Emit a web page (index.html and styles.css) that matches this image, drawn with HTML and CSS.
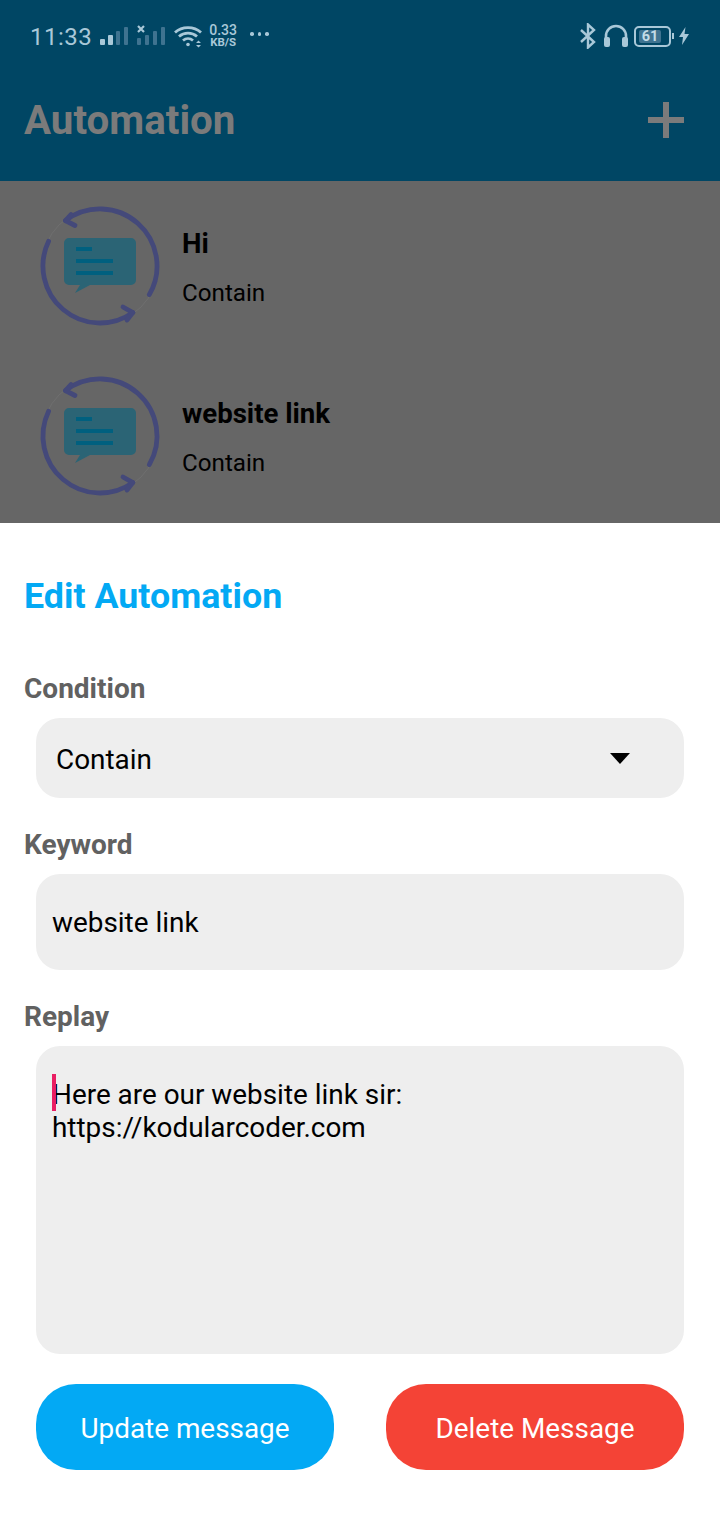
FILE: index.html
```html
<!DOCTYPE html>
<html lang="en">
<head>
  <meta charset="UTF-8"/>
  <title>Automation</title>
  <link rel="stylesheet" href="styles.css">
</head>
<body>
  <div class="screen">
    <!-- Dimmed page behind the sheet -->
    <div class="backdrop">
      <header class="app-bar">
        <div class="status-bar">
          <div class="status-left">
            <span class="clock">11:33</span>
            <svg class="sig" width="32" height="22" viewBox="0 0 32 22">
              <rect x="1" y="14" width="5" height="6" rx="1" fill="#a9c8d8"/>
              <rect x="9" y="10" width="5" height="10" rx="1" fill="#a9c8d8"/>
              <rect x="17" y="6" width="4" height="14" rx="1" fill="#3f7390"/>
              <rect x="25" y="2" width="4" height="18" rx="1" fill="#3f7390"/>
            </svg>
            <svg class="sig sig-2" width="32" height="22" viewBox="0 0 32 22">
              <path d="M2 1l6 6M8 1l-6 6" stroke="#a9c8d8" stroke-width="2.2"/>
              <rect x="1" y="13" width="4" height="7" rx="1" fill="#3f7390"/>
              <rect x="9" y="10" width="4" height="10" rx="1" fill="#3f7390"/>
              <rect x="17" y="6" width="4" height="14" rx="1" fill="#3f7390"/>
              <rect x="25" y="2" width="4" height="18" rx="1" fill="#3f7390"/>
            </svg>
            <svg class="wifi" width="30" height="24" viewBox="0 0 30 24" fill="none" stroke="#a9c8d8" stroke-width="2.8">
              <path d="M1 8.500C8 2 20 2 27 8.500"/>
              <path d="M5 12.500C10 8 18 8 23 12.500"/>
              <path d="M9 16.500C12 14 16 14 19 16.500"/>
              <circle cx="14" cy="20.500" r="1.800" fill="#a9c8d8" stroke="none"/>
              <path d="M22 19l2.500-2.500 2.500 2.500zM22 21h5l-2.500 2.500z" fill="#a9c8d8" stroke="none"/>
            </svg>
            <div class="speed"><span>0.33</span><span class="speed-unit">KB/S</span></div>
            <span class="more">
              <i></i><i></i><i></i>
            </span>
          </div>
          <div class="status-right">
            <svg width="18" height="26" viewBox="0 0 18 26" fill="none" stroke="#a9c8d8" stroke-width="2.400">
              <path d="M2 7l13 12-6 5.500V1.500l6 5.500L2 19"/>
            </svg>
            <svg width="26" height="24" viewBox="0 0 26 24" fill="none">
              <path d="M3 16V12a10 10 0 0 1 20 0v4" stroke="#a9c8d8" stroke-width="2.600"/>
              <rect x="1" y="13" width="6" height="10" rx="2" fill="#a9c8d8"/>
              <rect x="19" y="13" width="6" height="10" rx="2" fill="#a9c8d8"/>
            </svg>
            <div class="battery"><span class="battery-level">61</span></div>
            <svg width="12" height="18" viewBox="0 0 12 18"><path d="M7.500 0L1 10h4l-1 8 7-11H6.500z" fill="#a9c8d8"/></svg>
          </div>
        </div>
        <div class="title-row">
          <h1>Automation</h1>
          <span class="add-btn"></span>
        </div>
      </header>

      <div class="list">
        <div class="list-item">
          <svg class="item-icon" width="120" height="120" viewBox="0 0 120 120">
            <use href="#autoIcon"/>
          </svg>
          <div class="item-text">
            <div class="item-title">Hi</div>
            <div class="item-sub">Contain</div>
          </div>
        </div>
        <div class="list-item">
          <svg class="item-icon" width="120" height="120" viewBox="0 0 120 120">
            <use href="#autoIcon"/>
          </svg>
          <div class="item-text">
            <div class="item-title">website link</div>
            <div class="item-sub">Contain</div>
          </div>
        </div>
      </div>
    </div>

    <!-- Bottom sheet -->
    <section class="sheet">
      <h2>Edit Automation</h2>

      <label class="field-label label-condition">Condition</label>
      <div class="field select-field">
        <span>Contain</span>
        <span class="caret"></span>
      </div>

      <label class="field-label">Keyword</label>
      <div class="field input-field">website link</div>

      <label class="field-label">Replay</label>
      <div class="field text-field">
        <span class="cursor"></span>
        <p>Here are our website link sir:<br>https://kodularcoder.com</p>
      </div>

      <div class="actions">
        <button class="btn btn-update">Update message</button>
        <button class="btn btn-delete">Delete Message</button>
      </div>
    </section>
  </div>

  <svg width="0" height="0" class="defs">
    <defs>
      <g id="autoIcon">
        <circle cx="60" cy="61" r="58" fill="none" stroke="#6f6f6f" stroke-width="1"/>
        <g fill="none" stroke="#44497a" stroke-width="4.800" stroke-linecap="round">
          <path d="M25.500 15.600A57 57 0 0 1 109.300 89.600"/>
          <path d="M25.500 15.600l9.500 4.900M25.500 15.600l5.500-6"/>
          <path d="M8.600 36.300A57 57 0 0 0 92.800 107.600"/>
          <path d="M92.800 107.600l-9.800-5.600M92.800 107.600l-5.800 7.400"/>
        </g>
        <path d="M29 33h62a5 5 0 0 1 5 5v37a5 5 0 0 1-5 5H50l-15 8 5-8H29a5 5 0 0 1-5-5V38a5 5 0 0 1 5-5z" fill="#2b6475"/>
        <rect x="36" y="42" width="16" height="4" fill="#00607f"/>
        <rect x="36" y="54" width="37" height="4" fill="#00607f"/>
        <rect x="36" y="66" width="37" height="4" fill="#00607f"/>
      </g>
    </defs>
  </svg>
</body>
</html>
```

FILE: styles.css
```css
* { box-sizing: border-box; margin: 0; padding: 0; }
body { font-family: Roboto, sans-serif; background: #fff; }

.screen {
  width: 720px;
  height: 1520px;
  display: flex;
  flex-direction: column;
  overflow: hidden;
}
.defs { position: absolute; }

/* Dimmed part */
.backdrop {
  height: 523px;
  background: #666;
  overflow: hidden;
}
.app-bar {
  height: 181px;
  background: #004664;
  padding: 0 36px 0 24px;
}
.status-bar {
  height: 72px;
  display: flex;
  justify-content: space-between;
  align-items: center;
  color: #a9c8d8;
  margin-right: -6px;
}
.status-left, .status-right {
  display: flex;
  align-items: center;
}
.status-left { padding-left: 6px; }
.status-right { gap: 6px; }
.clock { font-size: 24px; letter-spacing: 0.5px; padding-top: 2px; }
.sig { margin-left: 7px; }
.sig-2 { margin-left: 5px; }
.wifi { margin-left: 6px; }
.speed {
  display: flex;
  flex-direction: column;
  align-items: center;
  margin-left: 5px;
  font-size: 14px;
  line-height: 12px;
  font-weight: 500;
}
.speed-unit { font-size: 11.500px; font-weight: 700; }
.more {
  display: flex;
  gap: 4px;
  margin-left: 13px;
  margin-bottom: 4px;
}
.more i {
  width: 3.500px;
  height: 3.500px;
  background: #a9c8d8;
  border-radius: 50%;
}
.battery {
  width: 37px;
  height: 21px;
  margin: 0 1px 0 -1px;
  border: 2px solid #a9c8d8;
  border-radius: 5px;
  padding: 2px;
  position: relative;
}
.battery::after {
  content: "";
  position: absolute;
  right: -5px;
  top: 5px;
  width: 2px;
  height: 6px;
  background: #a9c8d8;
}
.battery-level {
  display: block;
  width: 22px;
  height: 100%;
  margin-left: 1px;
  background: #3f7390;
  border-radius: 2px;
  font-size: 14.500px;
  line-height: 13px;
  font-weight: 700;
  text-align: center;
  color: #c4dbe6;
}
.title-row {
  height: 96px;
  display: flex;
  justify-content: space-between;
  align-items: center;
}
.title-row h1 {
  font-size: 40.300px;
  font-weight: 700;
  color: #7b7b7b;
}
.add-btn {
  width: 36px;
  height: 36px;
  background:
    linear-gradient(#7b7b7b, #7b7b7b) center / 100% 6px no-repeat,
    linear-gradient(#7b7b7b, #7b7b7b) center / 6px 100% no-repeat;
}

.list-item {
  height: 170px;
  padding: 24px 0 0 40px;
  display: flex;
}
.item-icon { flex-shrink: 0; overflow: visible; }
.item-text { margin-left: 22px; padding-top: 23px; }
.item-title {
  font-size: 27.600px;
  line-height: 32px;
  font-weight: 700;
  color: #000;
}
.item-sub {
  margin-top: 19px;
  font-size: 24.200px;
  line-height: 28px;
  color: #000;
}

/* Sheet */
.sheet {
  flex: 1;
  background: #fff;
  padding: 50px 36px 0 36px;
}
.sheet h2 {
  margin-left: -12px;
  font-size: 35.800px;
  line-height: 46px;
  font-weight: 700;
  color: #03a9f4;
}
.field-label {
  display: block;
  margin-left: -12px;
  margin-top: 31px;
  font-size: 28px;
  line-height: 32px;
  font-weight: 700;
  color: #616161;
}
.label-condition { margin-top: 54px; }
.field {
  margin-top: 13px;
  background: #eee;
  border-radius: 24px;
  font-size: 27.900px;
  color: #000;
}
.select-field {
  height: 80px;
  padding: 2px 54px 0 20px;
  display: flex;
  justify-content: space-between;
  align-items: center;
}
.caret {
  width: 0;
  height: 0;
  border-left: 10px solid transparent;
  border-right: 10px solid transparent;
  border-top: 11px solid #000;
  margin-top: -2px;
}
.input-field {
  height: 96px;
  line-height: 98px;
  padding-left: 16px;
}
.text-field {
  height: 308px;
  padding: 32px 16px;
  position: relative;
}
.text-field p { line-height: 33px; }
.cursor {
  position: absolute;
  left: 16px;
  top: 28px;
  width: 4px;
  height: 37px;
  background: #e91e63;
}
.actions {
  display: flex;
  justify-content: space-between;
  margin-top: 30px;
}
.btn {
  width: 298px;
  height: 86px;
  padding-top: 2px;
  border: none;
  border-radius: 40px;
  font-family: Roboto, sans-serif;
  font-size: 27.900px;
  color: #fff;
}
.btn-update { background: #03a9f4; }
.btn-delete { background: #f44336; }
```
